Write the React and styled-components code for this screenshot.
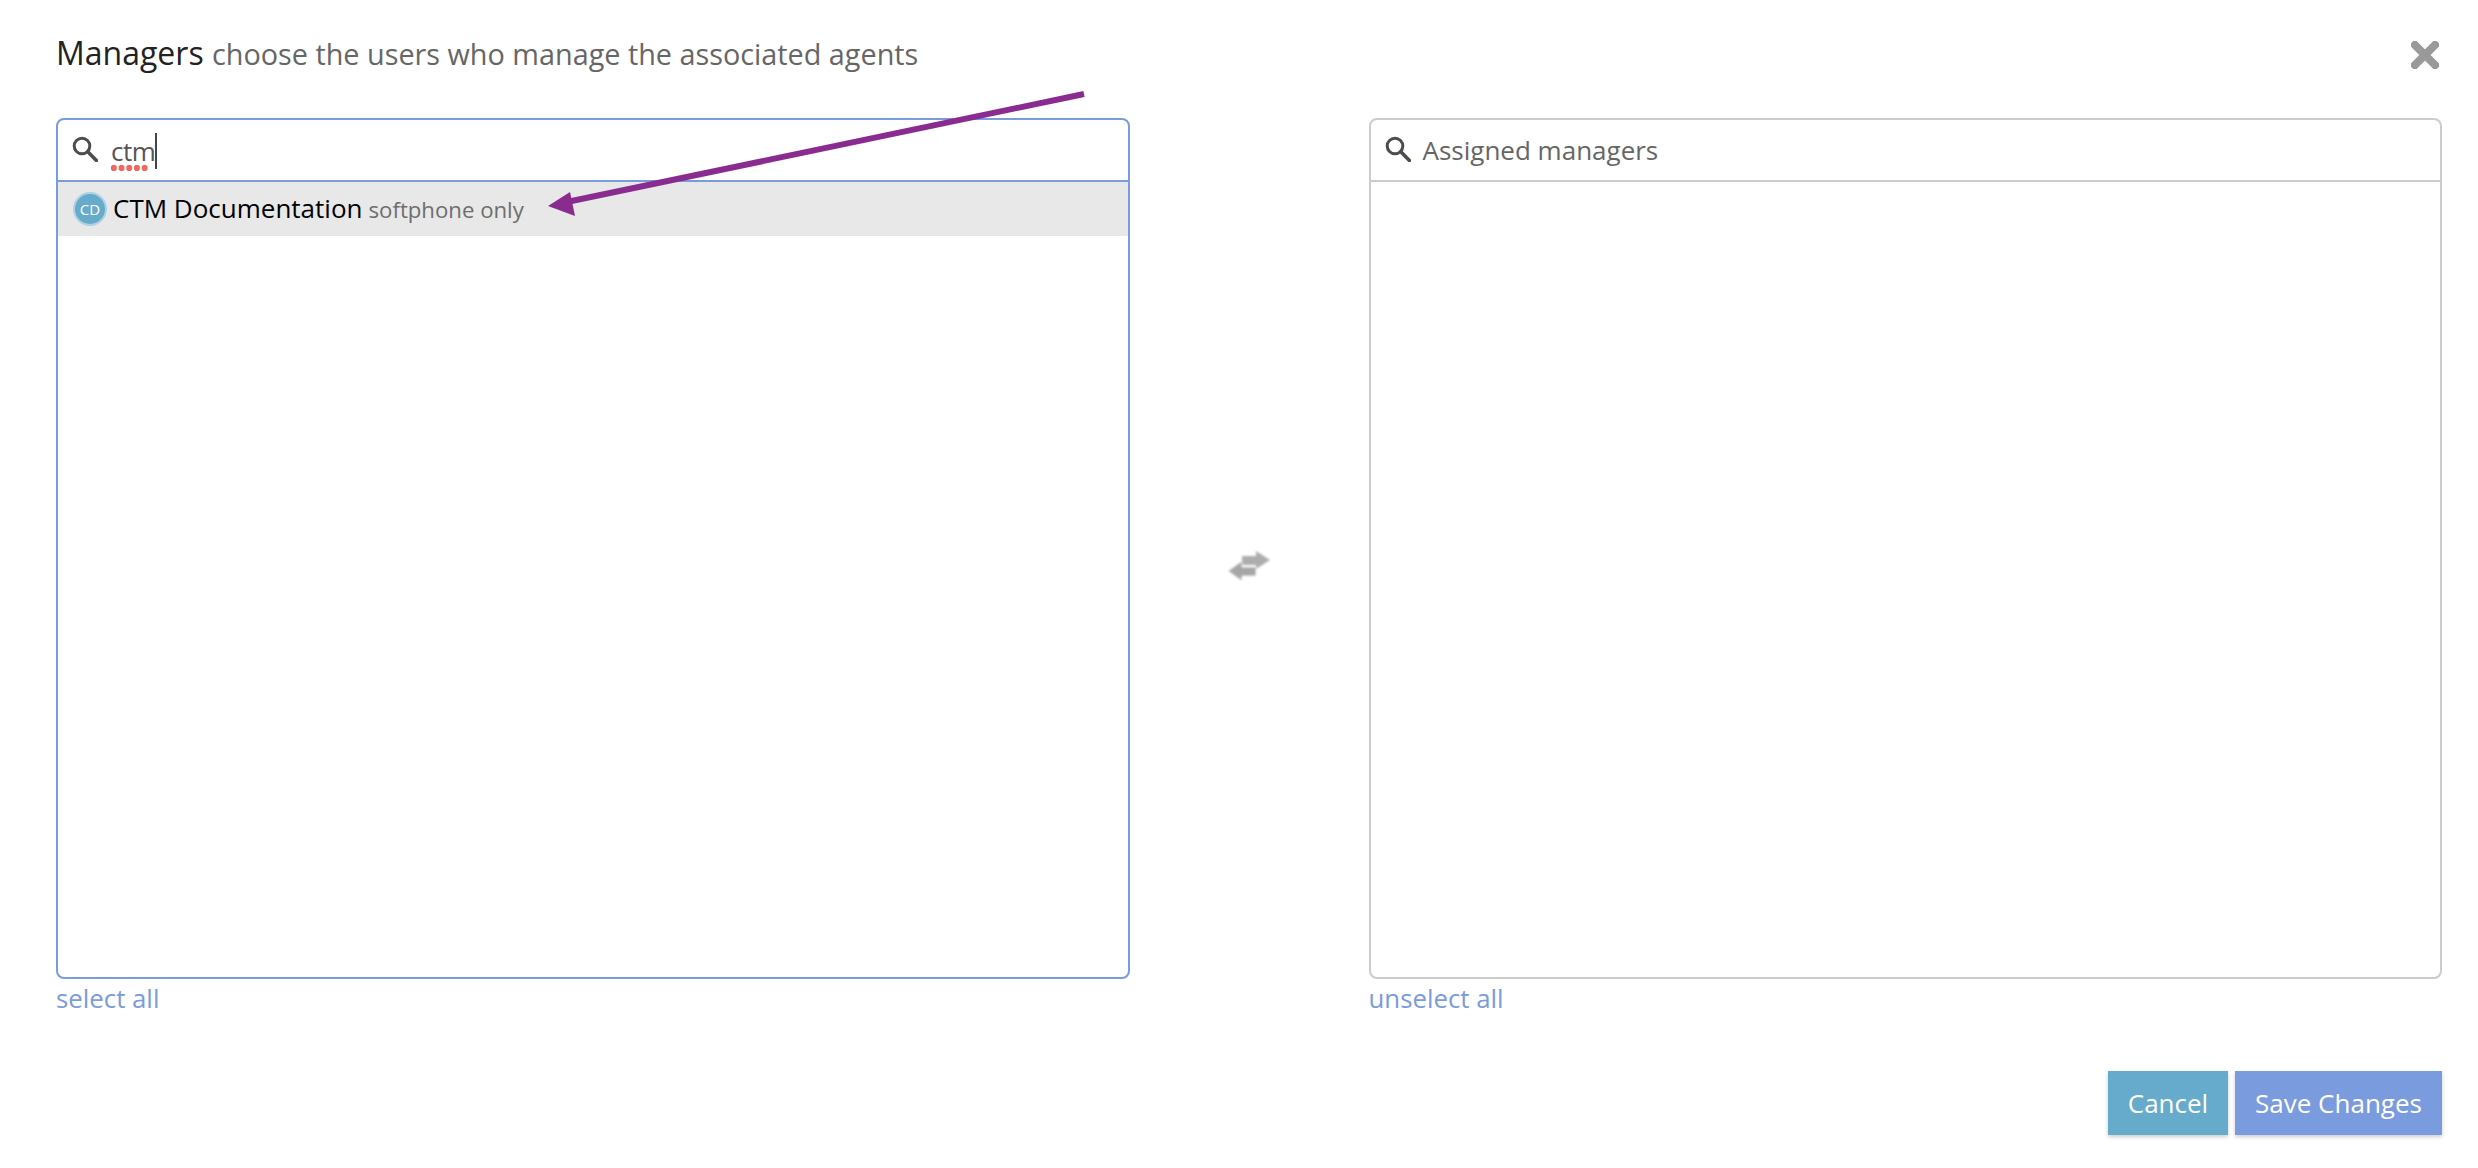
import React from "react";
import styled, { createGlobalStyle } from "styled-components";

const GlobalStyle = createGlobalStyle`
  html, body {
    margin: 0;
    padding: 0;
    background: #fff;
    font-family: "Open Sans", "Noto Sans", sans-serif;
  }
`;

const SearchIcon = () => (
  <SearchSvg viewBox="0 0 26 26">
    <circle cx="10" cy="10" r="7.8" fill="none" stroke="#4d4d4d" strokeWidth="3" />
    <path d="M15.8 15.8 L24.4 24.4" stroke="#4d4d4d" strokeWidth="3.6" strokeLinecap="round" />
  </SearchSvg>
);

const Panel = ({ active, placeholder, value, items, link }) => (
  <Column>
    <Box $active={active}>
      <SearchRow $active={active}>
        <SearchIcon />
        {value ? (
          <Typed>
            <Misspelled>{value}</Misspelled>
            <Caret />
          </Typed>
        ) : (
          <Placeholder>{placeholder}</Placeholder>
        )}
      </SearchRow>
      {items.map((item) => (
        <Row key={item.name}>
          <Avatar>{item.initials}</Avatar>
          <Name>{item.name}</Name>
          <Note>{item.note}</Note>
        </Row>
      ))}
    </Box>
    <TextLink>{link}</TextLink>
  </Column>
);

export default function App() {
  return (
    <Page>
      <GlobalStyle />
      <Header>
        <Title>
          Managers <Subtitle>choose the users who manage the associated agents</Subtitle>
        </Title>
        <CloseSvg viewBox="0 0 28 28">
          <path d="M4 4 L24 24 M24 4 L4 24" stroke="#999" strokeWidth="8" strokeLinecap="square" />
        </CloseSvg>
      </Header>
      <Columns>
        <Panel
          active
          value="ctm"
          link="select all"
          items={[{ initials: "CD", name: "CTM Documentation", note: "softphone only" }]}
        />
        <Middle>
          <SwapSvg viewBox="0 0 42 30">
            <path d="M14 5 H28 V0 L42 9 L28 18 V14 H14 Z" fill="#adadad" />
            <path
              d="M28 16 H14 V10 L0 20 L14 30 V25 H28 Z"
              fill="#a6a6a6"
              stroke="#fff"
              strokeWidth="0.8"
            />
          </SwapSvg>
        </Middle>
        <Panel placeholder="Assigned managers" link="unselect all" items={[]} />
      </Columns>
      <Footer>
        <Button $color="#66abcb" $width="120px">Cancel</Button>
        <Button $color="#7a9bdd" $width="207px">Save Changes</Button>
      </Footer>
      <ArrowSvg viewBox="0 0 2478 1168">
        <path d="M1084 94 L562 203" stroke="#8a2b90" strokeWidth="6" fill="none" />
        <path d="M548 206 L570 192 L575 216 Z" fill="#8a2b90" />
      </ArrowSvg>
    </Page>
  );
}

const Page = styled.div`
  position: relative;
  width: 2478px;
  height: 1168px;
  box-sizing: border-box;
  padding: 0 36px 0 56px;
  overflow: hidden;
`;

const Header = styled.div`
  height: 118px;
  box-sizing: border-box;
  padding-top: 29px;
  display: flex;
  justify-content: space-between;
  align-items: flex-start;
`;

const Title = styled.div`
  font-size: 32px;
  line-height: 48px;
  color: #222;
`;

const Subtitle = styled.span`
  font-size: 28.8px;
  color: #666;
`;

const CloseSvg = styled.svg`
  width: 28px;
  height: 28px;
  margin-top: 12px;
  margin-right: 3px;
`;

const Columns = styled.div`
  display: grid;
  grid-template-columns: 1fr 239px 1fr;
`;

const Column = styled.div`
  display: flex;
  flex-direction: column;
`;

const Box = styled.div`
  height: 861px;
  box-sizing: border-box;
  border: 2px solid ${(props) => (props.$active ? "#7a9bdd" : "#cccccc")};
  border-radius: 8px;
  overflow: hidden;
`;

const SearchRow = styled.div`
  height: 62px;
  box-sizing: border-box;
  border-bottom: 2px solid ${(props) => (props.$active ? "#7a9bdd" : "#cccccc")};
  display: flex;
  align-items: center;
  padding-left: 14px;
  gap: 12px;
`;

const SearchSvg = styled.svg`
  width: 26px;
  height: 26px;
  flex: none;
  margin-top: -2px;
`;

const Typed = styled.div`
  display: flex;
  align-items: center;
  font-size: 26px;
  color: #555;
  margin-top: 2px;
  margin-left: 1px;
`;

const Misspelled = styled.span`
  position: relative;
  line-height: 34px;
  letter-spacing: -0.5px;

  &::after {
    content: "";
    position: absolute;
    left: -1px;
    bottom: -3px;
    width: 38.5px;
    height: 6px;
    background-image: radial-gradient(circle, #f0695f 3px, transparent 3.2px);
    background-size: 7.7px 6px;
    background-repeat: repeat-x;
  }
`;

const Caret = styled.span`
  width: 2px;
  height: 36px;
  background: #444;
`;

const Placeholder = styled.span`
  font-size: 26px;
  color: #666;
`;

const Row = styled.div`
  height: 54px;
  box-sizing: border-box;
  padding-bottom: 2px;
  background: #e8e8e8;
  display: flex;
  align-items: center;
  padding-left: 15px;
`;

const Avatar = styled.div`
  width: 34px;
  height: 34px;
  box-sizing: border-box;
  flex: none;
  margin-top: 1px;
  border-radius: 50%;
  border: 2px solid #add2e2;
  background: #66abcb;
  color: #fff;
  font-size: 15px;
  display: flex;
  align-items: center;
  justify-content: center;
`;

const Name = styled.span`
  margin-left: 6px;
  font-size: 26px;
  color: #000;
`;

const Note = styled.span`
  margin-left: 6px;
  margin-top: 2px;
  font-size: 22.2px;
  color: #6e6e6e;
`;

const TextLink = styled.a`
  font-size: 25.8px;
  line-height: 38px;
  color: #7a9bdd;
`;

const Middle = styled.div`
  height: 861px;
  display: flex;
  align-items: center;
  justify-content: center;
`;

const SwapSvg = styled.svg`
  width: 42px;
  height: 30px;
  margin-top: 34px;
  filter: blur(0.8px);
`;

const Footer = styled.div`
  display: flex;
  justify-content: flex-end;
  gap: 7px;
  margin-top: 54px;
`;

const Button = styled.div`
  width: ${(props) => props.$width};
  height: 64px;
  background: ${(props) => props.$color};
  box-shadow: 0 2px 4px rgba(0, 0, 0, 0.2);
  color: #fff;
  font-size: 26px;
  display: flex;
  align-items: center;
  justify-content: center;
`;

const ArrowSvg = styled.svg`
  position: absolute;
  inset: 0;
  width: 100%;
  height: 100%;
  pointer-events: none;
`;
